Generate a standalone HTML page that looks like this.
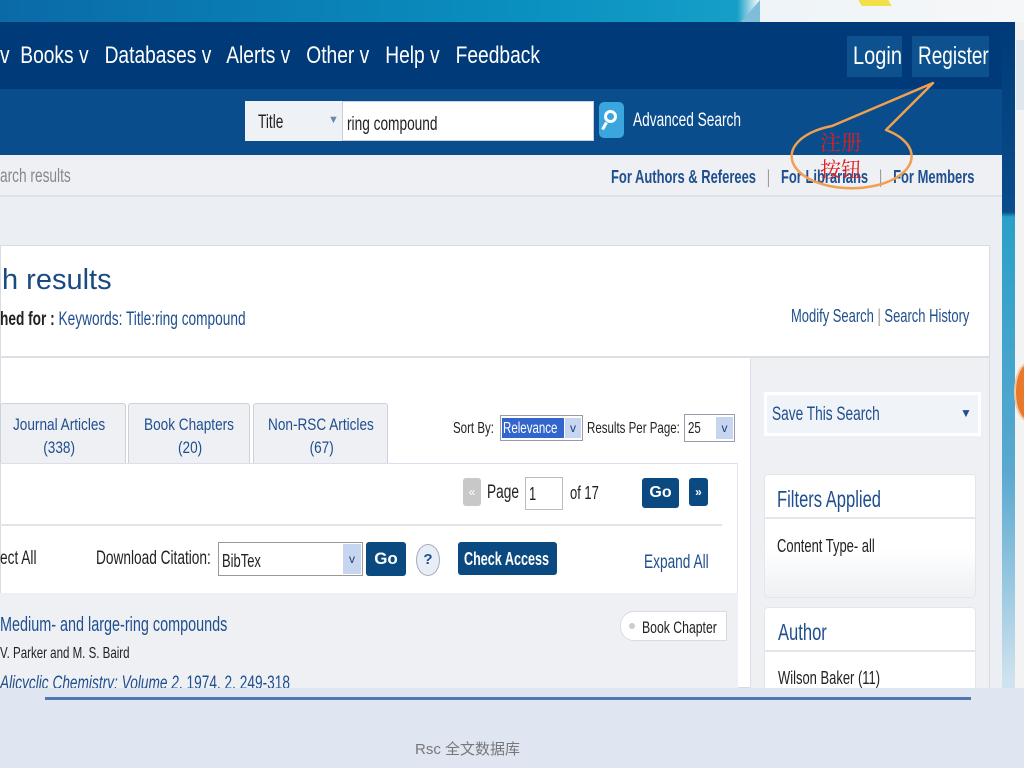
<!DOCTYPE html>
<html><head><meta charset="utf-8"><style>
*{margin:0;padding:0;box-sizing:border-box}
body{width:1024px;height:768px;overflow:hidden;position:relative;background:#f4f4f4;font-family:"Liberation Sans","Noto Sans CJK SC",sans-serif}
div,span{position:absolute}
.t{white-space:nowrap;transform:scaleX(.72);transform-origin:left top}
.w{color:#fff}
.lk{color:#1f4f8f}
.btn{background:#0b4a80;border-radius:3px;color:#fff;font-weight:bold}
</style></head><body>
<div style="left:0;top:0;width:1024px;height:23px;background:linear-gradient(90deg,#0a6aa8,#0a8fbf 50%,#159fc8 72%,#eef4f8 74%,#f6f7f8)"></div>
<div style="left:740px;top:0;width:0;height:0;border-left:20px solid transparent;border-bottom:23px solid #7fbedb"></div>
<div style="left:860px;top:0;width:30px;height:6px;background:#f2e04a;transform:skewX(30deg)"></div>
<div style="left:1002px;top:22px;width:13px;height:666px;background:linear-gradient(180deg,#003a78 0,#0a4d8c 190px,#2aa0c8 195px,#5aa8d0 450px,#cfe3ef 660px)"></div>
<div style="left:1015px;top:22px;width:9px;height:666px;background:#f3f3f3"></div>
<div style="left:1016px;top:40px;width:8px;height:70px;background:#dfe6ee"></div>
<div style="left:1014px;top:362px;width:30px;height:60px;border-radius:50%;background:#e8782a;border:2px solid #f1c6a0"></div>
<div style="left:0;top:22px;width:1002px;height:67px;background:#003a78"></div>
<div class="t w" style="left:0;top:42px;font-size:24px;transform:scaleX(.8)">v&nbsp;&nbsp;Books v&nbsp;&nbsp; Databases v&nbsp;&nbsp; Alerts v&nbsp;&nbsp; Other v&nbsp;&nbsp; Help v&nbsp;&nbsp; Feedback</div>
<div style="left:847px;top:36px;width:55px;height:41px;background:#0d528f"></div>
<div style="left:912px;top:36px;width:77px;height:41px;background:#0d528f"></div>
<div class="t w" style="left:853px;top:42px;font-size:25px;transform:scaleX(.8)">Login</div>
<div class="t w" style="left:918px;top:42px;font-size:25px;transform:scaleX(.76)">Register</div>
<div style="left:0;top:89px;width:1002px;height:66px;background:#0a4d8c"></div>
<div style="left:245px;top:101px;width:97px;height:40px;background:#eef1f6"></div>
<div class="t" style="left:258px;top:112px;font-size:19px;color:#222">Title</div>
<div style="left:328px;top:114px;font-size:11px;color:#6a88aa">▼</div>
<div style="left:342px;top:101px;width:252px;height:40px;background:#fff;border:1px solid #ccd"></div>
<div class="t" style="left:347px;top:114px;font-size:19px;color:#222">ring compound</div>
<div style="left:599px;top:102px;width:25px;height:36px;background:#3ba6dd;border-radius:5px"></div>
<div style="left:604px;top:110px;width:13px;height:13px;border:3px solid #fff;border-radius:50%"></div>
<div style="left:603px;top:122px;width:3px;height:8px;background:#fff;transform:rotate(30deg)"></div>
<div class="t w" style="left:633px;top:110px;font-size:19px">Advanced Search</div>
<div style="left:0;top:155px;width:1002px;height:42px;background:#eef0f4;border-bottom:2px solid #dde2ea"></div>
<div class="t" style="left:0;top:166px;font-size:19px;color:#888">arch results</div>
<div class="t lk" style="left:611px;top:167px;font-size:18px;font-weight:bold">For Authors &amp; Referees&nbsp;&nbsp; <span style="position:static;color:#999;font-weight:normal">|</span>&nbsp;&nbsp; For Librarians&nbsp;&nbsp; <span style="position:static;color:#999;font-weight:normal">|</span>&nbsp;&nbsp; For Members</div>
<div style="left:0;top:197px;width:1002px;height:491px;background:#ebeef2"></div>
<div style="left:0;top:245px;width:990px;height:443px;background:#fff;border:1px solid #d8dce2"></div>
<div style="left:0;top:356px;width:990px;height:2px;background:#dcdfe4"></div>
<div style="left:2px;top:264px;font-size:29px;color:#1a4a80;white-space:nowrap">h results</div>
<div class="t" style="left:0;top:309px;font-size:19px;color:#222;font-weight:bold">hed for : <span style="position:static;color:#1f4f8f;font-weight:normal">Keywords: Title:ring compound</span></div>
<div class="t lk" style="left:791px;top:306px;font-size:18px">Modify Search <span style="position:static;color:#999">|</span> Search History</div>
<div style="left:750px;top:358px;width:239px;height:330px;background:#eef0f4;border-left:1px solid #dde"></div>
<div style="left:764px;top:392px;width:217px;height:44px;background:#fff"></div>
<div style="left:767px;top:395px;width:211px;height:38px;background:#f0f3f8"></div>
<div class="t lk" style="left:772px;top:404px;font-size:19px">Save This Search</div>
<div style="left:960px;top:406px;font-size:12px;color:#1f4f8f">▼</div>
<div style="left:764px;top:474px;width:212px;height:124px;background:linear-gradient(#fff 60%,#eef0f3);border:1px solid #e3e6ea;border-radius:4px"></div>
<div style="left:765px;top:517px;width:210px;height:2px;background:#e3e6ea"></div>
<div class="t lk" style="left:777px;top:486px;font-size:23px">Filters Applied</div>
<div class="t" style="left:777px;top:536px;font-size:18px;color:#222">Content Type- all</div>
<div style="left:764px;top:607px;width:212px;height:90px;background:#fff;border:1px solid #e3e6ea;border-radius:4px"></div>
<div style="left:765px;top:650px;width:210px;height:2px;background:#e3e6ea"></div>
<div class="t lk" style="left:778px;top:619px;font-size:23px">Author</div>
<div class="t" style="left:778px;top:668px;font-size:18px;color:#222">Wilson Baker (11)</div>
<div style="left:0;top:403px;width:126px;height:60px;background:#eef0f4;border:1px solid #ccd2da;border-bottom:none;border-radius:3px 3px 0 0"></div>
<div style="left:128px;top:403px;width:122px;height:60px;background:#eef0f4;border:1px solid #ccd2da;border-bottom:none;border-radius:3px 3px 0 0"></div>
<div style="left:253px;top:403px;width:135px;height:60px;background:#eef0f4;border:1px solid #ccd2da;border-bottom:none;border-radius:3px 3px 0 0"></div>
<div class="t lk" style="left:13px;top:413px;font-size:17px;line-height:23px;transform:scaleX(.8)">Journal Articles<br>&nbsp;&nbsp;&nbsp;&nbsp;&nbsp;&nbsp;&nbsp;&nbsp;(338)</div>
<div class="t lk" style="left:144px;top:413px;font-size:17px;line-height:23px;transform:scaleX(.8)">Book Chapters<br>&nbsp;&nbsp;&nbsp;&nbsp;&nbsp;&nbsp;&nbsp;&nbsp;&nbsp;(20)</div>
<div class="t lk" style="left:268px;top:413px;font-size:17px;line-height:23px;transform:scaleX(.8)">Non-RSC Articles<br>&nbsp;&nbsp;&nbsp;&nbsp;&nbsp;&nbsp;&nbsp;&nbsp;&nbsp;&nbsp;&nbsp;(67)</div>
<div style="left:0;top:463px;width:738px;height:1px;background:#dde"></div>
<div style="left:737px;top:463px;width:1px;height:225px;background:#e3e6ea"></div>
<div class="t" style="left:453px;top:420px;font-size:16px;color:#222">Sort By:</div>
<div style="left:500px;top:415px;width:83px;height:26px;border:1px solid #99a;background:#fff"></div>
<div style="left:502px;top:418px;width:62px;height:20px;background:#3366cc"></div>
<div class="t w" style="left:503px;top:420px;font-size:16px">Relevance</div>
<div style="left:565px;top:418px;width:16px;height:20px;background:#c7d6f0;color:#1a3a7a;font-size:12px;text-align:center;line-height:20px">v</div>
<div class="t" style="left:587px;top:420px;font-size:16px;color:#222">Results Per Page:</div>
<div style="left:684px;top:414px;width:51px;height:28px;border:1px solid #99a;background:#fff"></div>
<div class="t" style="left:688px;top:420px;font-size:16px;color:#222">25</div>
<div style="left:716px;top:417px;width:17px;height:22px;background:#c7d6f0;color:#1a3a7a;font-size:12px;text-align:center;line-height:22px">v</div>
<div style="left:463px;top:478px;width:18px;height:28px;background:#c8c8c8;border-radius:3px;color:#fff;font-size:12px;text-align:center;line-height:28px">«</div>
<div class="t" style="left:487px;top:482px;font-size:19px;color:#222">Page</div>
<div style="left:525px;top:477px;width:38px;height:33px;border:1px solid #bbb;background:#fff"></div>
<div class="t" style="left:529px;top:484px;font-size:18px;color:#222">1</div>
<div class="t" style="left:570px;top:483px;font-size:18px;color:#222">of 17</div>
<div class="btn" style="left:642px;top:478px;width:37px;height:30px;text-align:center;line-height:30px;font-size:16px">Go</div>
<div class="btn" style="left:689px;top:478px;width:19px;height:28px;text-align:center;line-height:28px;font-size:12px">»</div>
<div style="left:0;top:524px;width:722px;height:2px;background:#e2e4e8"></div>
<div class="t" style="left:0;top:548px;font-size:19px;color:#222">ect All</div>
<div class="t" style="left:96px;top:548px;font-size:19px;color:#222">Download Citation:</div>
<div style="left:218px;top:542px;width:145px;height:34px;border:1px solid #999;background:#fff"></div>
<div class="t" style="left:222px;top:551px;font-size:18px;color:#222">BibTex</div>
<div style="left:343px;top:544px;width:18px;height:30px;background:#c7d6f0;color:#1a3a7a;font-size:12px;text-align:center;line-height:30px">v</div>
<div class="btn" style="left:366px;top:542px;width:40px;height:34px;text-align:center;line-height:34px;font-size:17px">Go</div>
<div style="left:416px;top:544px;width:24px;height:32px;border-radius:50%;background:#e8eef6;border:1px solid #aab;color:#1f4f8f;font-weight:bold;text-align:center;line-height:30px;font-size:15px">?</div>
<div class="btn" style="left:458px;top:542px;width:99px;height:33px"></div>
<div class="t w" style="left:464px;top:549px;font-size:18px;font-weight:bold;transform:scaleX(.7)">Check Access</div>
<div class="t lk" style="left:644px;top:552px;font-size:19px">Expand All</div>
<div style="left:0;top:593px;width:738px;height:95px;background:#eef0f4"></div>
<div style="left:620px;top:611px;width:107px;height:30px;background:#fff;border:1px solid #d8dce2;border-radius:14px 0 0 14px"></div>
<div style="left:629px;top:623px;width:6px;height:6px;border-radius:50%;background:#ccc"></div>
<div class="t" style="left:642px;top:618px;font-size:17px;color:#222">Book Chapter</div>
<div class="t lk" style="left:0;top:614px;font-size:20px">Medium- and large-ring compounds</div>
<div class="t" style="left:0;top:645px;font-size:16px;color:#222">V. Parker and M. S. Baird</div>
<div class="t lk" style="left:0;top:673px;font-size:19px;height:15px;overflow:hidden"><i>Alicyclic Chemistry: Volume 2</i>, 1974, 2, 249-318</div>
<svg style="position:absolute;left:0;top:0" width="1024" height="768">
<path d="M832 126 L933 83 L886 130 A60 32 0 1 1 832 126 Z" fill="none" stroke="#f0a050" stroke-width="2.5" stroke-linejoin="round"/>
</svg>
<div style="left:820px;top:129px;font-size:21px;color:#e02020;font-family:'Noto Serif CJK SC',serif;line-height:27px">注册<br>按钮</div>
<div style="left:0;top:688px;width:1024px;height:80px;background:#dfe6f1"></div>
<div style="left:45px;top:697px;width:926px;height:3px;background:#4f78b0"></div>
<div style="left:415px;top:738px;font-size:15px;color:#777">Rsc 全文数据库</div>
</body></html>
